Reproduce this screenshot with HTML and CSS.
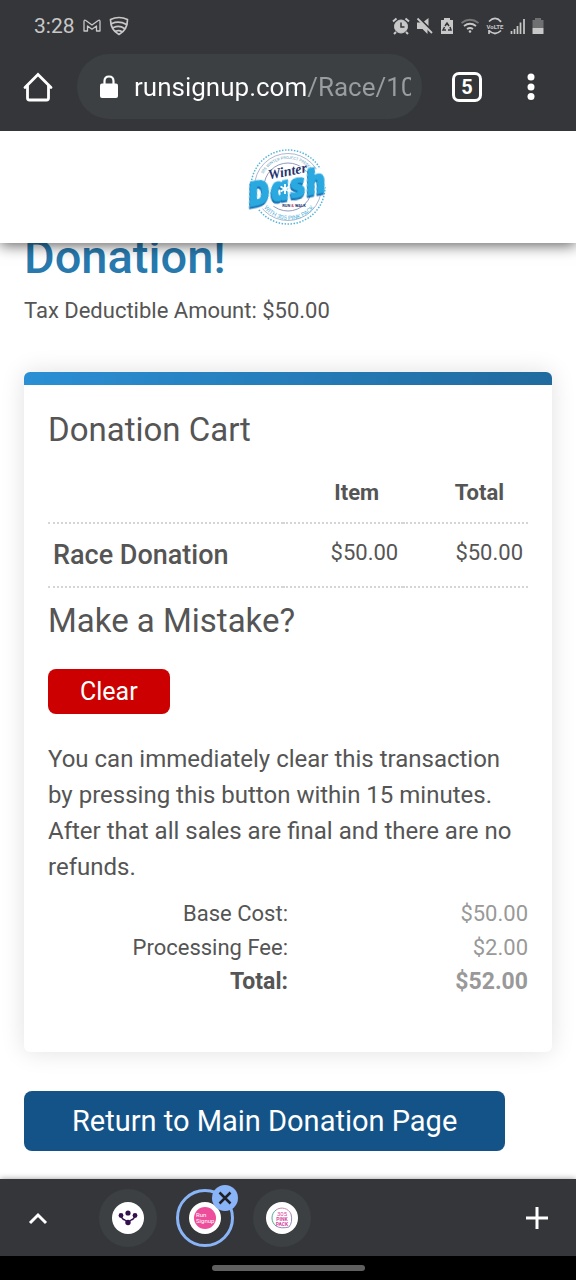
FILE: index.html
```html
<!DOCTYPE html>
<html lang="en">
<head>
    <meta charset="UTF-8">
    <meta name="viewport" content="width=device-width, initial-scale=1.0">
    <title>Winter Dash Donation</title>
    <link rel="stylesheet" href="styles.css">
</head>
<body>
    <header class="browser">
        <div class="status">
            <span class="time">3:28</span>
            <svg width="18" height="16" viewBox="0 0 18 16" fill="none" stroke="currentColor" stroke-width="1.3" stroke-linejoin="round"><path d="M1 13V3.500Q1 1.500 2.800 2.500L9 7l6.200-4.500Q17 1.500 17 3.500V13h-3.500V8L9 11.200 4.500 8v5z"/></svg>
            <svg width="20" height="20" viewBox="0 0 20 20" fill="none" stroke="currentColor" stroke-width="1.7" stroke-linecap="round" stroke-linejoin="round"><path d="M1.500 3.500Q10-.5 18.500 3.500 18.500 14 10 18.500 1.500 14 1.500 3.500zM3 7.500q7-3 14.500 1M4.500 11.500q6-2.500 11 1M7 15q3.500-1 6 .8"/></svg>
            <div class="status-right">
                <svg width="18" height="18" viewBox="0 0 18 18" fill="none" stroke="currentColor"><circle cx="9" cy="9.500" r="6.500" fill="currentColor"/><path d="M1 4.500L4.500 1.500M17 4.500l-3.500-3M4 15l-2 2M14 15l2 2" stroke-width="2"/><path d="M9 5.500v4.500h3.500" stroke="#35363a" stroke-width="1.500"/></svg>
                <svg width="18" height="18" viewBox="0 0 18 18" fill="currentColor"><path d="M1 5.500h5l5.500 5.500v6L6.500 12H1zM8 4.500L12.500 1v8z"/><path d="M2 .5l14 14" stroke="#35363a" stroke-width="1.500"/><path d="M1.500 1.500L16 16" stroke="currentColor" stroke-width="1.800"/></svg>
                <svg width="14" height="18" viewBox="0 0 14 18"><path d="M1 3h3V1h6v2h3v14H1z" fill="currentColor"/><path d="M5 9l2-3 2 3M10 10l1 3H8M6 13H3l1.500-3" fill="none" stroke="#35363a" stroke-width="1.500"/></svg>
                <svg width="20" height="18" viewBox="0 0 20 18" fill="none" stroke="currentColor" stroke-width="1.800"><path d="M1.500 6Q10-.5 18.500 6" opacity=".45"/><path d="M4 9q6-4.500 12 0M7 12q3-2 6 0"/><circle cx="10" cy="14.500" r="1.300" fill="currentColor" stroke="none"/></svg>
                <svg width="18" height="18" viewBox="0 0 18 18" fill="none" stroke="currentColor" stroke-width="1.700" overflow="visible"><path d="M3 4.500Q9-1.500 15 4.500M3 13.500q6 6 12 0M12 2l3 3M3 13v4"/><text x="9" y="11.500" text-anchor="middle" class="volte">VoLTE</text></svg>
                <svg width="16" height="18" viewBox="0 0 16 18" stroke="currentColor" stroke-width="1.700"><path d="M1.500 14v3M4.500 12v5M7.500 9v8M10.500 5.500V17M14 2v15"/></svg>
                <svg width="12" height="18" viewBox="0 0 12 18" fill="currentColor"><path d="M.5 3H3V1h6v2h2.500v8H.5z" opacity=".4"/><path d="M.5 11h11v6H.5z"/></svg>
            </div>
        </div>
        <div class="toolbar">
            <button class="icon-btn" aria-label="Home">
                <svg width="30" height="30" viewBox="0 0 30 30" fill="none" stroke="currentColor" stroke-width="2.800" stroke-linecap="round"><path d="M2 15.500L15 2.500l13 13"/><path d="M4.500 14v12q0 2 2 2h17q2 0 2-2V14"/></svg>
            </button>
            <div class="address">
                <svg width="18" height="24" viewBox="0 0 18 24"><rect y="8.500" width="18" height="14.500" rx="2" fill="#fff"/><path d="M4.500 9V6q0-4.500 4.500-4.500T13.500 6v3" fill="none" stroke="#fff" stroke-width="2.200"/></svg>
                <input type="text" class="url" aria-label="Address" value="runsignup.com/Race/10">
            </div>
            <button class="icon-btn tab-count" aria-label="Tabs">5</button>
            <button class="icon-btn" aria-label="Menu">
                <svg width="8" height="28" viewBox="0 0 8 28" fill="currentColor"><circle cx="4" cy="4" r="3.500"/><circle cx="4" cy="14" r="3.500"/><circle cx="4" cy="23.500" r="3.500"/></svg>
            </button>
        </div>
    </header>

    <div class="site-header">
        <svg width="84" height="78" viewBox="-2 0 84 78" role="img" aria-label="Winter Dash">
            <defs>
                <path id="arcTop" d="M12 39a28 28 0 0 1 56 0"/>
                <path id="arcBottom" d="M9 40a32 32 0 0 0 64 0"/>
            </defs>
            <g fill="none">
                <circle cx="40" cy="39" r="37" stroke="#55b5d9" stroke-width="1.500" stroke-dasharray="1.500 1.500"/>
                <circle cx="40" cy="39" r="33.500" stroke="#9aa6c4" stroke-width=".8"/>
                <circle cx="40" cy="39" r="24" stroke="#8590b5" stroke-width=".9"/>
            </g>
            <path d="M0 38l20-5 5-10 30-5 2 6 20-5 4 18-20 12-56 14z" fill="#fff"/>
            <text class="logo-small"><textPath href="#arcTop" startOffset="50%" text-anchor="middle">305 WINTER PROJECT PRESENTS</textPath></text>
            <text class="logo-ring"><textPath href="#arcBottom" startOffset="50%" text-anchor="middle">WITH 305 PINK PACK</textPath></text>
            <g transform="rotate(-11 40 42)">
                <text x="43" y="28" text-anchor="middle" class="logo-winter">Winter</text>
                <text x="39" y="51" text-anchor="middle" class="logo-dash">Dash</text>
            </g>
            <path d="M37 36v10M32.500 38.500l9 5M32.500 43.500l9-5" stroke="#fff" stroke-width="1.800"/>
            <text x="46" y="59" text-anchor="middle" class="logo-run">RUN <tspan fill="#e33b73">&amp;</tspan> WALK</text>
        </svg>
    </div>

    <main class="page">
        <h1>Donation!</h1>
        <p class="deductible">Tax Deductible Amount: $50.00</p>

        <section class="cart">
            <h2>Donation Cart</h2>
            <table>
                <thead>
                    <tr><th></th><th scope="col">Item</th><th scope="col">Total</th></tr>
                </thead>
                <tbody>
                    <tr><th scope="row">Race Donation</th><td>$50.00</td><td>$50.00</td></tr>
                </tbody>
            </table>
            <h2>Make a Mistake?</h2>
            <button class="clear">Clear</button>
            <p class="notice">You can immediately clear this transaction by pressing this button within 15 minutes. After that all sales are final and there are no refunds.</p>
            <dl class="totals">
                <dt>Base Cost:</dt><dd>$50.00</dd>
                <dt>Processing Fee:</dt><dd>$2.00</dd>
                <dt class="sum">Total:</dt><dd class="sum">$52.00</dd>
            </dl>
        </section>

        <a class="return" href="#">Return to Main Donation Page</a>
    </main>

    <nav class="tabs" aria-label="Open tabs">
        <button class="icon-btn" aria-label="Show tabs">
            <svg width="20" height="14" viewBox="0 0 20 14" fill="none" stroke="currentColor" stroke-width="3"><path d="M2 12l8-8 8 8"/></svg>
        </button>
        <div class="tab-list">
            <button class="tab" aria-label="Tab 1">
                <svg width="32" height="32" viewBox="0 0 32 32"><circle cx="16" cy="16" r="16" fill="#fff"/><g fill="#35104f"><circle cx="16" cy="11" r="2.600"/><circle cx="9" cy="13.500" r="2.400"/><circle cx="23" cy="13.500" r="2.400"/><circle cx="16" cy="20.500" r="2.700"/></g><path d="M9 13.500q1 4 4 4.500l3 2.500 3-2.500q3-.5 4-4.500" fill="none" stroke="#35104f" stroke-width="1.300"/></svg>
            </button>
            <div class="tab-wrap">
                <button class="tab active" aria-label="RunSignup">
                    <svg width="32" height="32" viewBox="0 0 32 32"><circle cx="16" cy="16" r="16" fill="#fff"/><circle cx="16" cy="16" r="11" fill="#ee4d9b"/><text x="7" y="15" class="tab-text">Run</text><text x="7" y="21" class="tab-text">Signup</text></svg>
                </button>
                <button class="close" aria-label="Close tab">
                    <svg width="14" height="14" viewBox="0 0 14 14" stroke="#202124" stroke-width="2.500"><path d="M1.500 1.500l11 11M12.500 1.500l-11 11"/></svg>
                </button>
            </div>
            <button class="tab" aria-label="305 Pink Pack">
                <svg width="32" height="32" viewBox="0 0 32 32"><circle cx="16" cy="16" r="16" fill="#fff"/><g fill="none" stroke-width="1"><path d="M10 24A10 10 0 0 1 10 8" stroke="#55a79b"/><path d="M10 8a10 10 0 0 1 15 4" stroke="#c987b4"/><path d="M25 12q2 8-2 13-8 2-13-1" stroke="#9b86ba"/></g><text x="16" y="14" text-anchor="middle" class="pack light">305</text><text x="16" y="19" text-anchor="middle" class="pack">PINK</text><text x="16" y="24" text-anchor="middle" class="pack">PACK</text></svg>
            </button>
        </div>
        <button class="icon-btn" aria-label="New tab">
            <svg width="24" height="24" viewBox="0 0 24 24" stroke="currentColor" stroke-width="3"><path d="M12 1v22M1 12h22"/></svg>
        </button>
    </nav>
    <div class="gesture"><span></span></div>
</body>
</html>
```
FILE: styles.css
```css
* {
    box-sizing: border-box;
}

body {
    margin: 0;
    min-height: 100vh;
    display: flex;
    flex-direction: column;
    font-family: Roboto, sans-serif;
    font-size: 22px;
    color: #555;
    background: #fff;
}

h1, h2, p, dl, dd {
    margin: 0;
}

svg {
    display: block;
    flex: none;
}

button, input {
    font-family: inherit;
    border: none;
    padding: 0;
    background: none;
    color: inherit;
}

button {
    cursor: pointer;
}

/* browser bar */
.browser {
    position: relative;
    z-index: 3;
    background: #35363a;
    color: #fff;
    padding-bottom: 12px;
}

.status {
    display: flex;
    align-items: center;
    gap: 8px;
    height: 54px;
    padding: 0 32px 2px 34px;
    color: #c8c8c8;
}

.time {
    font-size: 21px;
}

.status-right {
    display: flex;
    align-items: center;
    gap: 6px;
    margin-left: auto;
}

.volte {
    font-size: 6px;
    font-weight: bold;
    fill: currentColor;
    stroke: none;
}

.toolbar {
    display: flex;
    align-items: center;
    height: 65px;
    padding: 0 30px 0 23px;
}

.icon-btn {
    display: flex;
    align-items: center;
    justify-content: center;
    min-width: 30px;
    color: #fff;
}

.address {
    display: flex;
    align-items: center;
    gap: 16px;
    flex: 1;
    min-width: 0;
    height: 65px;
    margin: 0 30px 0 24px;
    padding: 0 11px 0 23px;
    border-radius: 33px;
    background: #3c4043;
}

.url {
    flex: 1;
    min-width: 0;
    height: 40px;
    font-size: 26px;
    color: transparent;
    background: linear-gradient(to right, #fff 172px, #9a9da0 172px);
    background-clip: text;
    -webkit-background-clip: text;
}

.tab-count {
    width: 30px;
    height: 30px;
    margin-right: 34px;
    border: 3px solid #fff;
    border-radius: 7px;
    font-size: 20px;
    font-weight: bold;
}

/* race logo */
.site-header {
    position: relative;
    z-index: 2;
    display: flex;
    justify-content: center;
    align-items: center;
    height: 112px;
    background: #fff;
    box-shadow: 0 2px 14px rgba(0, 0, 0, 0.65);
}

.logo-small {
    font-size: 4px;
    fill: #5f9fbd;
}

.logo-ring {
    font-size: 6px;
    fill: #4fb3dc;
}

.logo-winter {
    font: italic bold 14px "Liberation Serif", serif;
    fill: #26336f;
}

.logo-dash {
    font: italic 800 33px "Open Sans", sans-serif;
    fill: #2aa9e1;
    stroke: #2aa9e1;
    stroke-width: 1px;
    filter: drop-shadow(-1px 2px 0 #1672b5);
}

.logo-run {
    font-size: 4px;
    font-weight: bold;
    fill: #26336f;
}

/* page content */
.page {
    flex: 1;
    padding: 0 24px 28px;
}

h1 {
    margin-top: -11px;
    font-size: 47px;
    font-weight: 500;
    line-height: 50px;
    color: #2779ae;
}

.deductible {
    margin-top: 11px;
    line-height: 36px;
}

.cart {
    margin-top: 43px;
    padding: 37px 24px 53px;
    border-radius: 6px;
    background: linear-gradient(to right, #2a8fd4, #206a9e) top / 100% 13px no-repeat #fff;
    box-shadow: 0 0 24px rgba(0, 0, 0, 0.12);
}

h2 {
    font-size: 33px;
    font-weight: 400;
    line-height: 42px;
}

table {
    width: 100%;
    table-layout: fixed;
    border-collapse: collapse;
    margin: 12px 0;
}

th, td {
    height: 64px;
    padding: 0 5px 6px;
    border-bottom: 2px dotted #d5d5d5;
    text-align: right;
}

th:first-child {
    width: 49%;
}

th:nth-child(2) {
    width: 25%;
}

thead th {
    height: 60px;
    padding: 0 24px 0 0;
    font-weight: bold;
}

tbody th {
    padding-bottom: 0;
    font-size: 27px;
    font-weight: 500;
    text-align: left;
}

.clear {
    height: 45px;
    margin-top: 27px;
    padding: 0 32px;
    border-radius: 8px;
    background: #c00;
    color: #fff;
    font-size: 25px;
}

.notice {
    margin: 27px 0 12px;
    font-size: 24px;
    line-height: 36px;
}

.totals {
    display: grid;
    grid-template-columns: 1fr 1fr;
    line-height: 34px;
    text-align: right;
}

.totals dd {
    color: #999;
}

.totals .sum {
    font-size: 23px;
    font-weight: bold;
}

.return {
    display: inline-block;
    margin-top: 39px;
    padding: 0 48px;
    border-radius: 8px;
    background: #145388;
    color: #fff;
    font-size: 29px;
    line-height: 60px;
    text-decoration: none;
}

/* bottom tab strip */
.tabs {
    position: relative;
    display: flex;
    align-items: center;
    height: 77px;
    padding: 0 24px 0 23px;
    background: #35363a;
    box-shadow: 0 0 6px rgba(0, 0, 0, 0.4);
}

.tab-list {
    display: flex;
    flex: 1;
    gap: 19px;
    margin-left: 46px;
}

.tab {
    display: flex;
    align-items: center;
    justify-content: center;
    width: 58px;
    height: 58px;
    border-radius: 50%;
    background: #3c4043;
}

.tab.active {
    border: 3px solid #8ab4f8;
    background: none;
}

.tab-wrap {
    position: relative;
}

.close {
    position: absolute;
    top: -4px;
    right: -4px;
    display: flex;
    align-items: center;
    justify-content: center;
    width: 26px;
    height: 26px;
    border-radius: 50%;
    background: #8ab4f8;
}

.tab-text {
    font-size: 6px;
    fill: #fff;
}

.pack {
    font-size: 5px;
    font-weight: bold;
    fill: #d6459a;
}

.pack.light {
    font-size: 6px;
    font-weight: normal;
}

.gesture {
    display: flex;
    align-items: center;
    justify-content: center;
    position: relative;
    height: 24px;
    background: #000;
}

.gesture span {
    width: 153px;
    height: 6px;
    border-radius: 3px;
    background: #5f5f5f;
}
```
